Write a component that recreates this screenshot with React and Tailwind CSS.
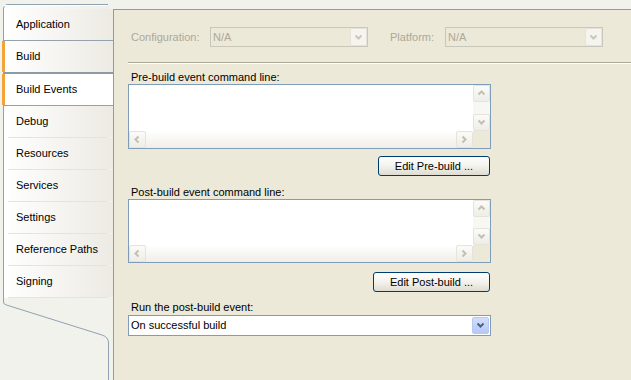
import React from 'react';

const tabs = ['Application', 'Build', 'Build Events', 'Debug', 'Resources', 'Services', 'Settings', 'Reference Paths', 'Signing'];

function Chevron({ dir, color = '#c3c0b2' }) {
  const pts = {
    up: '1.5,5.5 4.5,2.5 7.5,5.5',
    down: '1.5,2.5 4.5,5.5 7.5,2.5',
    left: '5.5,1.5 2.5,4.5 5.5,7.5',
    right: '2.5,1.5 5.5,4.5 2.5,7.5',
  }[dir];
  return (
    <svg width="9" height="9" viewBox="0 0 9 9">
      <polyline points={pts} fill="none" stroke={color} strokeWidth="2" />
    </svg>
  );
}

function ScrollBtn({ dir }) {
  return (
    <div className="w-[17px] h-[17px] shrink-0 flex items-center justify-center rounded-[2px] border border-[#e6e4da] bg-linear-to-b from-[#fbfbf8] to-[#eeede6]">
      <Chevron dir={dir} />
    </div>
  );
}

function CommandBox({ h }) {
  return (
    <div className={`w-[363px] ${h} border border-[#7f9db9] bg-white flex flex-col`}>
      <div className="flex flex-1">
        <div className="flex-1" />
        <div className="w-[17px] flex flex-col bg-[#f7f7f3]">
          <ScrollBtn dir="up" />
          <div className="flex-1" />
          <ScrollBtn dir="down" />
        </div>
      </div>
      <div className="flex h-[17px]">
        <div className="flex flex-1 bg-linear-to-b from-white to-[#efeee7]">
          <ScrollBtn dir="left" />
          <div className="flex-1" />
          <ScrollBtn dir="right" />
        </div>
        <div className="w-[17px] bg-[#ece9d8]" />
      </div>
    </div>
  );
}

function XpButton({ w, children }) {
  return (
    <div className="w-[363px] flex justify-end pr-[1px]">
      <button className={`${w} h-[20px] rounded-[3px] border border-[#003c74] bg-linear-to-b from-white via-[#f3f2ed] to-[#dedcd2] text-[11px] text-black leading-none`}>
        {children}
      </button>
    </div>
  );
}

function DisabledSelect() {
  return (
    <div className="w-[158px] h-[20px] border border-[#c9c7ba] flex items-center">
      <span className="flex-1 pl-[2px] text-[#aca899]">N/A</span>
      <div className="w-[17px] h-[18px] flex items-center justify-center border border-[#e6e4da] rounded-[2px] bg-[#f5f4ef]">
        <Chevron dir="down" color="#c9c7ba" />
      </div>
    </div>
  );
}

export default function App() {
  return (
    <div className="w-[631px] h-[380px] flex overflow-hidden bg-[#f2f2ed] text-[11px] text-black" style={{ fontFamily: '"Liberation Sans", Arial, sans-serif' }}>
      {/* Tab strip */}
      <div className="w-[113px] shrink-0 flex flex-col">
        <div className="ml-[3px] mt-[4px] w-[105px] border-l border-t border-[#8ea2b1] rounded-tl-[5px] bg-linear-to-r from-white to-[#efeee8]">
          <div className="h-[4px] border-t border-white mr-[1px]" />
          <div className="w-[109px]">
            {tabs.map((t, i) => {
              const strong = i < 3;
              const selected = t === 'Build Events';
              const hot = t === 'Build' || selected;
              return (
                <div key={t} className="relative">
                  <div
                    className={`flex items-center pl-[12px] ${i === 1 ? 'h-[31px]' : 'h-[31px]'} ${
                      selected ? 'bg-white' : 'bg-linear-to-r from-white to-[#eceae3]'
                    }`}
                  >
                    {t}
                  </div>
                  {strong ? (
                    <div className={`${i === 1 ? 'h-[2px] bg-[#8c9ba6]' : 'h-[1px] bg-[#93a3ae]'}`} />
                  ) : (
                    <div className="h-[1px] ml-[4px] mr-[6px] bg-[#e4e3dc]" />
                  )}
                  {hot && <div className="absolute -left-[2px] top-0 h-[31px] w-[3px] bg-[#f2a33a]" />}
                </div>
              );
            })}
          </div>
        </div>
        <svg width="113" height="83" className="shrink-0">
          <path
            d="M3.5,0 V4 Q3.5,6.5 6.5,7 L102,37 Q108.5,39 108.5,45 V83"
            fill="none"
            stroke="#8ea2b1"
            strokeWidth="1"
          />
        </svg>
      </div>

      {/* Content */}
      <div className="flex-1 flex flex-col pt-[9px]">
        <div className="flex-1 border-l border-t border-[#8c9ca8] bg-[#ece9d8] pl-[14px] pt-[17px] flex flex-col">
          <div className="flex items-center h-[20px]">
            <span className="w-[82px] pl-[3px] text-[#aca899]">Configuration:</span>
            <DisabledSelect />
            <span className="ml-[22px] w-[55px] text-[#aca899]">Platform:</span>
            <DisabledSelect />
          </div>

          <div className="mt-[15px] border-t border-[#aca899] border-b border-b-white" />

          <div className="mt-[7px] pl-[3px] leading-[13px]">Pre-build event command line:</div>
          <CommandBox h="h-[65px]" />
          <div className="mt-[7px]">
            <XpButton w="w-[112px]">Edit Pre-build ...</XpButton>
          </div>

          <div className="mt-[10px] pl-[3px] leading-[13px]">Post-build event command line:</div>
          <CommandBox h="h-[64px]" />
          <div className="mt-[9px]">
            <XpButton w="w-[117px]">Edit Post-build ...</XpButton>
          </div>

          <div className="mt-[9px] pl-[3px] leading-[13px]">Run the post-build event:</div>
          <div className="mt-[1px] w-[363px] h-[21px] border border-[#7f9db9] bg-white flex items-center">
            <span className="flex-1 pl-[2px]">On successful build</span>
            <div className="w-[17px] h-[17px] mr-[1px] flex items-center justify-center rounded-[2px] border border-[#b7c9f2] bg-linear-to-b from-[#d2defc] to-[#b5c9f6]">
              <Chevron dir="down" color="#4d6185" />
            </div>
          </div>
        </div>
      </div>
    </div>
  );
}
